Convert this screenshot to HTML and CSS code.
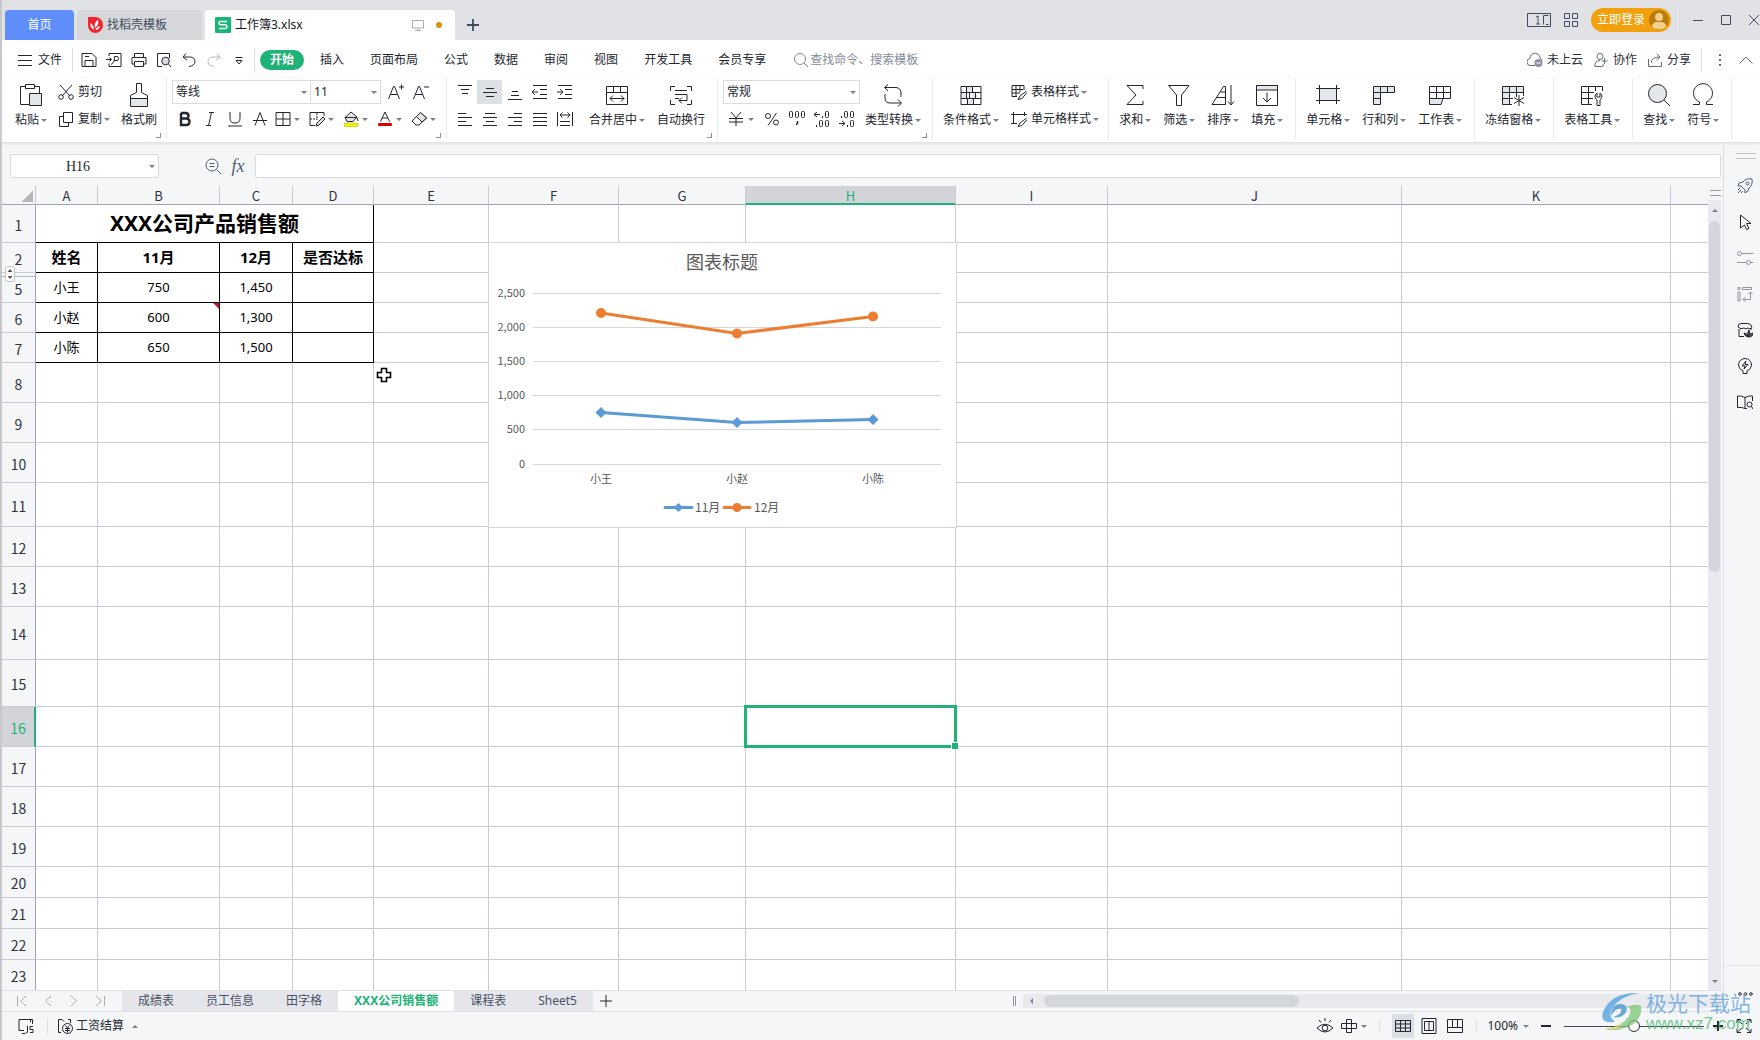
FILE: index.html
```html
<!DOCTYPE html>
<html lang="zh-CN">
<head>
<meta charset="utf-8">
<title>工作簿3.xlsx</title>
<link rel="stylesheet" href="styles.css">
</head>
<body>
<div class="app">
<header class="titlebar">
  <div class="doc-tabs">
    <button class="doc-tab home">首页</button>
    <button class="doc-tab store"><svg class="s16 logo" viewBox="0 0 16 16"><path d="M1 0H8A8 8 0 0 1 8 16A7.500 7.500 0 0 1 1 8Z" fill="#f5222d"/><path d="M7 13C4 11 3 9 3.500 6C6 8 7 10 7 13ZM8 11C7 8 8 5 11 2.500C12 6 11 9 8 11ZM8.500 13C9 11 11 9.500 13 9C12.500 11.500 11 12.800 8.500 13Z" fill="#fff"/></svg>找稻壳模板</button>
    <button class="doc-tab current"><svg class="s16 logo" viewBox="0 0 16 16"><rect width="16" height="16" rx="1" fill="#14b874"/><path d="M12 4.500H5.500Q4 4.500 4 6T5.500 7.800H10.500Q12 7.800 12 9.600T10.500 11.500H4" fill="none" stroke="#fff" stroke-width="1.500"/></svg><span class="doc-name">工作簿3.xlsx</span><svg class="s12 pale" viewBox="0 0 12 12"><path d="M.5 1.500H11.500V9H.5ZM6 9V11.500M3 11.500H9"/></svg><span class="dot"></span></button>
    <button class="plain add" aria-label="新建"><svg class="s12" viewBox="0 0 12 12"><path d="M6 0V12M0 6H12" stroke-width="1.800"/></svg></button>
  </div>
  <div class="win-tools">
    <button class="plain" aria-label="窗口"><svg class="w24" viewBox="0 0 24 16"><path d="M.5 1.500H23.500V14.500H.5ZM21.500 3.500H16.500V12.500M19 12.500H21.500M9 5L11 4V12M9 12H13"/></svg></button>
    <button class="plain" aria-label="应用"><svg class="s16" viewBox="0 0 16 16"><path d="M1.500 1.500H6.500V6.500H1.500ZM9.500 1.500H14.500V6.500H9.500ZM1.500 9.500H6.500V14.500H1.500ZM9.500 9.500H14.500V14.500H9.500Z"/></svg></button>
    <button class="login">立即登录<svg class="s20" viewBox="0 0 20 20"><circle cx="10" cy="10" r="10" fill="#b97c0a"/><circle cx="10" cy="7" r="4" fill="#f3cf8e"/><path d="M3 17Q3 12 8 12H12Q17 12 17 17Q10 22 3 17Z" fill="#f3cf8e"/></svg></button>
    <span class="bar tall"></span>
    <button class="plain" aria-label="最小化"><svg class="s12" viewBox="0 0 12 12"><path d="M1 6.500H11"/></svg></button>
    <button class="plain" aria-label="最大化"><svg class="s12" viewBox="0 0 12 12"><path d="M1.500 1.500H10.500V10.500H1.500Z"/></svg></button>
    <button class="plain" aria-label="关闭"><svg class="s12" viewBox="0 0 12 12"><path d="M1 1L11 11M11 1L1 11"/></svg></button>
  </div>
</header>

<nav class="menubar">
  <button class="plain file"><svg class="s16" viewBox="0 0 16 16"><path d="M1 3.500H15M1 8.500H15M1 13.500H15"/></svg>文件</button>
  <span class="bar"></span>
  <div class="quick">
    <button class="plain" aria-label="保存"><svg class="s16" viewBox="0 0 16 16"><path d="M1 1.500H11L15 5.500V14.500H1ZM4 14.500V8.500H12V14.500M4 4.500H8"/></svg></button>
    <button class="plain" aria-label="输出PDF"><svg class="s16" viewBox="0 0 16 16"><path d="M3 4V1.500H15V14.500H3V11.500M0 7.500H5M3.500 5.500L5.500 7.500L3.500 9.500M5 12.500C8 11 8.500 8 8.500 4.500H11Q12.500 4.500 12.500 6.500T11 8.500H8"/></svg></button>
    <button class="plain" aria-label="打印"><svg class="s16" viewBox="0 0 16 16"><path d="M3.500 5V1.500H12.500V5M3.500 12H1V5.500H15V12H12.500M3.500 9.500H12.500V14.500H3.500Z"/></svg></button>
    <button class="plain" aria-label="预览"><svg class="s16" viewBox="0 0 16 16"><path d="M6 14.500H1.500V1.500H13.500V6"/><circle cx="9.500" cy="9" r="3.800" fill="#d9dce2"/><path d="M12.500 12L15 15"/></svg></button>
    <button class="plain" aria-label="撤销"><svg class="s16" viewBox="0 0 16 16"><path d="M5 1.500L2 5L6 8M2.500 5H9.500Q14 5.500 14 9.500T8 14.500"/></svg></button>
    <button class="plain faint" aria-label="恢复"><svg class="s16" viewBox="0 0 16 16"><path d="M11 1.500L14 5L10 8M13.500 5H6.500Q2 5.500 2 9.500T8 14.500"/></svg></button>
    <button class="plain" aria-label="更多"><svg class="s16" viewBox="0 0 16 16"><path d="M4.500 5.500H11.500M5 8.500H11L8 12Z"/></svg></button>
  </div>
  <span class="bar"></span>
  <div class="menus">
    <button class="menu on">开始</button><button class="menu">插入</button><button class="menu">页面布局</button><button class="menu">公式</button><button class="menu">数据</button><button class="menu">审阅</button><button class="menu">视图</button><button class="menu">开发工具</button><button class="menu">会员专享</button>
  </div>
  <label class="search"><svg class="s16" viewBox="0 0 16 16"><circle cx="7" cy="7" r="5.500"/><path d="M11 11L15 15"/></svg><input type="text" placeholder="查找命令、搜索模板" aria-label="查找命令"></label>
  <div class="share">
    <button class="plain"><svg class="s16" viewBox="0 0 16 16"><path d="M8 13.500H4A3.500 3.500 0 0 1 3 6.500A5 5 0 0 1 13 6Q15 7 15 9"/><circle cx="11.500" cy="11" r="4" fill="#8e93a3" stroke="none"/><path d="M9.500 11H13.500" stroke="#fff"/></svg>未上云</button>
    <button class="plain"><svg class="s16" viewBox="0 0 16 16"><circle cx="7" cy="4.500" r="3"/><path d="M9 14.500H2Q1 9 7 8.500M9 14.500Q11 14 10 12M11.500 6V12M8.500 9H14.500"/></svg>协作</button>
    <button class="plain"><svg class="s16" viewBox="0 0 16 16"><path d="M1.500 7V14.500H14.500V10M4 11Q5 5 12 5M9.500 2L13 5L9.500 8"/></svg>分享</button>
    <span class="bar"></span>
    <button class="plain" aria-label="更多"><svg class="s16" viewBox="0 0 16 16"><path d="M8 2V4M8 7V9M8 12V14" stroke-width="2"/></svg></button>
    <button class="plain" aria-label="折叠"><svg class="s16" viewBox="0 0 16 16"><path d="M1.500 11.500L8 5L14.500 11.500"/></svg></button>
  </div>
</nav>

<section class="ribbon">
  <div class="group clip">
    <button class="big"><svg class="s24" viewBox="0 0 24 24"><path d="M6 3.500H1.500V21.500H10M16 3.500H20.500V10M6.500 1.500H15.500V5.500H6.500Z"/><path d="M10.500 10.500H22.500V22.500H10.500Z" fill="#e3e6ea"/></svg><span>粘贴<i class="caret"></i></span></button>
    <div class="stack">
      <button class="row"><svg class="s16" viewBox="0 0 16 16"><path d="M2 1L12 12M14 1L4 12"/><circle cx="3" cy="13" r="2.300"/><circle cx="13" cy="13" r="2.300"/></svg>剪切</button>
      <button class="row"><svg class="s16" viewBox="0 0 16 16"><path d="M5.500 1.500H14.500V11.500H5.500ZM5 5.500H1.500V15.500H10.500V12"/></svg>复制<i class="caret"></i></button>
    </div>
    <button class="big"><svg class="s24" viewBox="0 0 24 24"><path d="M3.500 15.500H20.500V23.500H3.500Z" fill="#e3e6ea"/><path d="M9.500 .5H14.500V9.500L20.500 12.500V15.500H3.500V12.500L9.500 9.500Z"/></svg><span>格式刷</span></button>
    <span class="corner"></span>
  </div>
  <div class="group type">
    <div class="stack">
      <div class="line">
        <span class="pick font"><select aria-label="字体"><option>等线</option></select></span><span class="pick size"><select aria-label="字号"><option>11</option></select></span>
        <button class="tool" aria-label="增大字号"><svg class="s16" viewBox="0 0 16 16"><path d="M.5 15L5.500 2.500H6.500L11.500 15M2.500 10.500H9.500M11 3H16M13.500 .5V5.500"/></svg></button>
        <button class="tool" aria-label="减小字号"><svg class="s16" viewBox="0 0 16 16"><path d="M.5 15L5.500 2.500H6.500L11.500 15M2.500 10.500H9.500M11 3H16"/></svg></button>
      </div>
      <div class="line">
        <button class="tool" aria-label="加粗"><svg class="s16" viewBox="0 0 16 16"><path d="M4 2H8.500Q11.500 2 11.500 4.800T8.500 7.500H4M4 7.500H9Q12.500 7.500 12.500 10.800T9 14H4V2" stroke-width="2.400"/></svg></button>
        <button class="tool" aria-label="倾斜"><svg class="s16" viewBox="0 0 16 16"><path d="M7 1.500H12M4 14.500H9M9.500 1.500L6.500 14.500"/></svg></button>
        <button class="tool" aria-label="下划线"><svg class="s16" viewBox="0 0 16 16"><path d="M3 1V7.500Q3 12 8 12T13 7.500V1M1 15H15"/></svg></button>
        <button class="tool" aria-label="删除线"><svg class="s16" viewBox="0 0 16 16"><path d="M3 14.500L8 1.500L13 14.500M1 9.500H15"/></svg></button>
        <button class="tool drop" aria-label="边框"><svg class="s16" viewBox="0 0 16 16"><path d="M1 1.500H15V14.500H1ZM8 1.500V14.500M1 8H15"/></svg><i class="caret"></i></button>
        <button class="tool drop" aria-label="绘制边框"><svg class="s16" viewBox="0 0 16 16"><path d="M15 5V1.500H1V14.500H6"/><path d="M8 2V9M1 8H8" stroke-dasharray="2 1"/><path d="M14 6L8 12L7 15L10 14L16 8Z" fill="#dfe2e7"/></svg><i class="caret"></i></button>
        <button class="tool drop" aria-label="填充颜色"><svg class="s16" viewBox="0 0 16 16"><path d="M8 1L14 6L10 10.500H4L2 6.500Z" fill="#e3e6ea"/><path d="M2 6.500H14L15 10"/><rect x="1" y="12" width="14" height="4" rx="2" fill="#f2f205" stroke="#9a9a33" stroke-width=".5"/></svg><i class="caret"></i></button>
        <button class="tool drop" aria-label="字体颜色"><svg class="s16" viewBox="0 0 16 16"><path d="M3.500 10.500L8 1L12.500 10.500M5 7H11"/><rect x="1" y="12" width="14" height="3" rx="1" fill="#e00000" stroke="none"/></svg><i class="caret"></i></button>
        <button class="tool drop" aria-label="清除"><svg class="s16" viewBox="0 0 16 16"><path d="M9.500 1.500L15.500 7L8 14H5L1 10Z"/><path d="M9.500 1.500L15.500 7L11 11L5.500 5.500Z" fill="#e3e6ea"/></svg><i class="caret"></i></button>
      </div>
    </div>
    <span class="corner"></span>
  </div>
  <div class="group align">
    <div class="stack">
      <div class="line">
        <button class="tool" aria-label="顶端对齐"><svg class="s16" viewBox="0 0 16 16"><path d="M1 1.500H15M4 5.500H12M5 9.500H11"/></svg></button>
        <button class="tool on" aria-label="垂直居中"><svg class="s16" viewBox="0 0 16 16"><path d="M4 4.500H12M1 8.500H15M4 12.500H12"/></svg></button>
        <button class="tool" aria-label="底端对齐"><svg class="s16" viewBox="0 0 16 16"><path d="M5 7.500H11M4 11.500H12M1 15.500H15"/></svg></button>
        <button class="tool" aria-label="减少缩进"><svg class="s16" viewBox="0 0 16 16"><path d="M1 1.500H15M8 5.500H15M8 10.500H15M1 14.500H15M0 8H6M3 5L0 8L3 11"/></svg></button>
        <button class="tool" aria-label="增加缩进"><svg class="s16" viewBox="0 0 16 16"><path d="M1 1.500H15M8 5.500H15M8 10.500H15M1 14.500H15M0 8H6M3 5L6 8L3 11"/></svg></button>
      </div>
      <div class="line">
        <button class="tool" aria-label="左对齐"><svg class="s16" viewBox="0 0 16 16"><path d="M1 2.500H9M1 6.500H15M1 10.500H9M1 14.500H15"/></svg></button>
        <button class="tool" aria-label="水平居中"><svg class="s16" viewBox="0 0 16 16"><path d="M3 2.500H13M1 6.500H15M4 10.500H12M1 14.500H15"/></svg></button>
        <button class="tool" aria-label="右对齐"><svg class="s16" viewBox="0 0 16 16"><path d="M7 2.500H15M1 6.500H15M7 10.500H15M1 14.500H15"/></svg></button>
        <button class="tool" aria-label="两端对齐"><svg class="s16" viewBox="0 0 16 16"><path d="M1 2.500H15M1 6.500H15M1 10.500H15M1 14.500H15"/></svg></button>
        <button class="tool" aria-label="分散对齐"><svg class="s16" viewBox="0 0 16 16"><path d="M.5 1V15M15.500 1V15M3 10.500H13M3 14.500H13M3 4H13M5.500 1.500L3 4L5.500 6.500M10.500 1.500L13 4L10.500 6.500"/></svg></button>
      </div>
    </div>
    <button class="big"><svg class="s24" viewBox="0 0 24 24"><path d="M1.500 3.500H22.500V21.500H1.500ZM1.500 9.500H22.500M8.500 3.500V9.500M15.500 3.500V9.500M5 15.500H19M8 12.500L5 15.500L8 18.500M16 12.500L19 15.500L16 18.500"/></svg><span>合并居中<i class="caret"></i></span></button>
    <button class="big"><svg class="s24" viewBox="0 0 24 24"><path d="M1.500 8V3.500H6M18 3.500H22.500V8M1.500 17V21.500H6M18 21.500H22.500V17M6 7.500H18M6 11.500H18V17.500H10M13 14.500L10 17.500L13 20.500M6 15.500H10"/></svg><span>自动换行</span></button>
    <span class="corner"></span>
  </div>
  <div class="group number">
    <div class="stack">
      <div class="line"><span class="pick format"><select aria-label="数字格式"><option>常规</option></select></span></div>
      <div class="line">
        <button class="tool drop" aria-label="货币"><svg class="s16" viewBox="0 0 16 16"><path d="M3 1L8 7L13 1M1 7.500H15M1 11H15M8 7V15"/></svg><i class="caret"></i></button>
        <button class="tool" aria-label="百分比"><svg class="s16" viewBox="0 0 16 16"><circle cx="4" cy="5" r="2.500"/><circle cx="12" cy="11.500" r="2.500"/><path d="M12.500 2L4 14.500"/></svg></button>
        <button class="tool" aria-label="千位分隔"><svg class="s18" viewBox="0 0 18 18"><rect x="1.500" y="1.500" width="3" height="6" rx="1"/><rect x="7.500" y="1.500" width="3" height="6" rx="1"/><rect x="13.500" y="1.500" width="3" height="6" rx="1"/><path d="M9.500 11V13L8.500 15" stroke-width="1.500"/></svg></button>
        <button class="tool" aria-label="增加小数位"><svg class="s18" viewBox="0 0 18 18"><path d="M1 4.500H7M4 2L1 4.500L4 7M9.500 6V8M3.500 15V17"/><rect x="12.500" y="1.500" width="3" height="6" rx="1"/><rect x="6.500" y="10.500" width="3" height="6" rx="1"/><rect x="12.500" y="10.500" width="3" height="6" rx="1"/></svg></button>
        <button class="tool" aria-label="减少小数位"><svg class="s18" viewBox="0 0 18 18"><path d="M1 13.500H7M4 11L7 13.500L4 16M9.500 15V17M3.500 6V8"/><rect x="12.500" y="10.500" width="3" height="6" rx="1"/><rect x="6.500" y="1.500" width="3" height="6" rx="1"/><rect x="12.500" y="1.500" width="3" height="6" rx="1"/></svg></button>
      </div>
    </div>
    <button class="big"><svg class="s24" viewBox="0 0 24 24"><path d="M7 1.500L3.500 4.500L7 8M4 4.500H15Q20 5 20 10V14M4 11V15Q4 20 9 20H20M17 16.500L20.500 20L17 23.500"/></svg><span>类型转换<i class="caret"></i></span></button>
    <span class="corner"></span>
  </div>
  <div class="group styles">
    <button class="big"><svg class="s24" viewBox="0 0 24 24"><path d="M2 9.500H7V15.500H2ZM13 9.500H18V15.500H13ZM7 15.500H14V21H7ZM7 4H13V9.500H7Z" fill="#e3e6ea" stroke="none"/><path d="M2 3.500H22V21.500H2ZM2 9.500H22M2 15.500H22M7.500 3.500V15.500M13.500 3.500V9.500M10.500 9.500V15.500M16.500 9.500V15.500M8.500 15.500V21.500M14.500 15.500V21.500"/></svg><span>条件格式<i class="caret"></i></span></button>
    <div class="stack">
      <button class="row"><svg class="s16" viewBox="0 0 16 16"><path d="M6 12.500H1V1.500H13V6M1 5.500H12M1 9H9M5 1.500V12M9 1.500V8M15.500 7L9 12L7 15.500L11 14.500L16 8.500"/></svg>表格样式<i class="caret"></i></button>
      <button class="row"><svg class="s16" viewBox="0 0 16 16"><path d="M0 3.500H16M2.500 1V13M0 12.500H6M13.500 1V5M15.500 7L9 12L7 15.500L11 14.500L16 8.500"/></svg>单元格样式<i class="caret"></i></button>
    </div>
  </div>
  <div class="group">
    <button class="big"><svg class="s24" viewBox="0 0 24 24"><path d="M20 6V2.500H4L13 12L4 21.500H20V18"/></svg><span>求和<i class="caret"></i></span></button>
    <button class="big"><svg class="s24" viewBox="0 0 24 24"><path d="M1.500 2.500H22L14.500 12V22.500H9.500V12Z"/></svg><span>筛选<i class="caret"></i></span></button>
    <button class="big"><svg class="s24" viewBox="0 0 24 24"><path d="M1 21.500L12.500 3.500H14.500V21.500ZM9.500 9H14M6 14.500H14M20 2V22M17 18.500L20 22L23 18.500"/></svg><span>排序<i class="caret"></i></span></button>
    <button class="big"><svg class="s24" viewBox="0 0 24 24"><path d="M1.500 2.500H22.500V7H1.500Z" fill="#e3e6ea"/><path d="M1.500 2.500H22.500V22.500H1.500ZM12 9.500V19M8 15L12 19L16 15"/></svg><span>填充<i class="caret"></i></span></button>
  </div>
  <div class="group">
    <button class="big"><svg class="s24" viewBox="0 0 24 24"><path d="M3.500 5.500H20.500V17.500H3.500Z" fill="#e3e6ea"/><path d="M0 5.500H24M0 17.500H24M3.500 2V21M20.500 2V21"/></svg><span>单元格<i class="caret"></i></span></button>
    <button class="big"><svg class="s24" viewBox="0 0 24 24"><path d="M1.500 3.500H22.500V9.500H8.500V21.500H1.500Z" fill="#e3e6ea"/><path d="M8.500 3.500V9.500M15.500 3.500V9.500M1.500 9.500H8.500M1.500 15.500H8.500"/></svg><span>行和列<i class="caret"></i></span></button>
    <button class="big"><svg class="s24" viewBox="0 0 24 24"><path d="M1.500 15.500H15L13 21.500H1.500Z" fill="#e3e6ea"/><path d="M1.500 3.500H22.500V15.500H1.500ZM1.500 9.500H22.500M8.500 3.500V15.500M15.500 3.500V15.500"/></svg><span>工作表<i class="caret"></i></span></button>
  </div>
  <div class="group">
    <button class="big"><svg class="s24" viewBox="0 0 24 24"><path d="M1.500 3.500H22.500V9.500H8.500V21.500H1.500Z" fill="#e3e6ea"/><path d="M8.500 3.500V9.500M15.500 3.500V14M1.500 9.500H8.500M1.500 15.500H12M22.500 9V13M8.500 21.500H11M18 12V23M13 14.500L23 20.500M23 14.500L13 20.500"/></svg><span>冻结窗格<i class="caret"></i></span></button>
  </div>
  <div class="group">
    <button class="big"><svg class="s24" viewBox="0 0 24 24"><path d="M12 21.500H1.500V3.500H22.500V8M1.500 9.500H14M1.500 15.500H13M8.500 3.500V21.500M15.500 3.500V8M17 10Q13 13 17 17V22.500H20V17Q24 13 20 10V14H17Z"/></svg><span>表格工具<i class="caret"></i></span></button>
  </div>
  <div class="group">
    <button class="big"><svg class="s24" viewBox="0 0 24 24"><circle cx="10.500" cy="10.500" r="9" fill="#e3e6ea"/><path d="M17 17L23 23"/></svg><span>查找<i class="caret"></i></span></button>
    <button class="big"><svg class="s24" viewBox="0 0 24 24"><path d="M2 21.500H8.500V19A9.500 9.500 0 1 1 15.500 19V21.500H22"/></svg><span>符号<i class="caret"></i></span></button>
  </div>
</section>

<div class="work">
<main class="book">
  <div class="formula">
    <span class="pick name"><input type="text" value="H16" aria-label="名称框"></span>
    <button class="plain zoomfx" aria-label="搜索"><svg class="s16" viewBox="0 0 16 16"><circle cx="7" cy="7" r="6"/><path d="M11.500 11.500L16 16M4.500 5.500H9.500M4.500 8.500H9.500"/></svg></button>
    <button class="plain fx"><i>fx</i></button>
    <input class="entry" type="text" aria-label="编辑栏">
  </div>
  <div class="sheet-row">
    <div class="sheet">
      <table>
        <colgroup><col class="ch"><col class="ca"><col class="cb"><col class="cc"><col class="cd"><col class="ce"><col class="cf"><col class="cg"><col class="chh"><col class="ci"><col class="cj"><col class="ck"><col></colgroup>
        <thead><tr><th><span class="all"></span></th><th>A</th><th>B</th><th>C</th><th>D</th><th>E</th><th>F</th><th>G</th><th class="sel">H</th><th>I</th><th>J</th><th>K</th><th></th></tr></thead>
        <tbody>
        <tr class="h38 data"><th>1</th><td colspan="4" class="title">XXX公司产品销售额</td><td></td><td></td><td></td><td></td><td></td><td></td><td></td><td></td></tr>
        <tr class="h30 data heads"><th>2</th><td>姓名</td><td>11月</td><td>12月</td><td>是否达标</td><td></td><td></td><td></td><td></td><td></td><td></td><td></td><td></td></tr>
        <tr class="h30 data after"><th>5</th><td>小王</td><td>750</td><td>1,450</td><td></td><td></td><td></td><td></td><td></td><td></td><td></td><td></td><td></td></tr>
        <tr class="h30 data"><th>6</th><td>小赵</td><td class="note">600</td><td>1,300</td><td></td><td></td><td></td><td></td><td></td><td></td><td></td><td></td><td></td></tr>
        <tr class="h30 data"><th>7</th><td>小陈</td><td>650</td><td>1,500</td><td></td><td></td><td></td><td></td><td></td><td></td><td></td><td></td><td></td></tr>
        <tr class="h40"><th>8</th><td></td><td></td><td></td><td></td><td></td><td></td><td></td><td></td><td></td><td></td><td></td><td></td></tr>
        <tr class="h40"><th>9</th><td></td><td></td><td></td><td></td><td></td><td></td><td></td><td></td><td></td><td></td><td></td><td></td></tr>
        <tr class="h40"><th>10</th><td></td><td></td><td></td><td></td><td></td><td></td><td></td><td></td><td></td><td></td><td></td><td></td></tr>
        <tr class="h44"><th>11</th><td></td><td></td><td></td><td></td><td></td><td></td><td></td><td></td><td></td><td></td><td></td><td></td></tr>
        <tr class="h40"><th>12</th><td></td><td></td><td></td><td></td><td></td><td></td><td></td><td></td><td></td><td></td><td></td><td></td></tr>
        <tr class="h40"><th>13</th><td></td><td></td><td></td><td></td><td></td><td></td><td></td><td></td><td></td><td></td><td></td><td></td></tr>
        <tr class="h53"><th>14</th><td></td><td></td><td></td><td></td><td></td><td></td><td></td><td></td><td></td><td></td><td></td><td></td></tr>
        <tr class="h47"><th>15</th><td></td><td></td><td></td><td></td><td></td><td></td><td></td><td></td><td></td><td></td><td></td><td></td></tr>
        <tr class="h40"><th class="sel">16</th><td></td><td></td><td></td><td></td><td></td><td></td><td></td><td class="active"></td><td></td><td></td><td></td><td></td></tr>
        <tr class="h40"><th>17</th><td></td><td></td><td></td><td></td><td></td><td></td><td></td><td></td><td></td><td></td><td></td><td></td></tr>
        <tr class="h40"><th>18</th><td></td><td></td><td></td><td></td><td></td><td></td><td></td><td></td><td></td><td></td><td></td><td></td></tr>
        <tr class="h40"><th>19</th><td></td><td></td><td></td><td></td><td></td><td></td><td></td><td></td><td></td><td></td><td></td><td></td></tr>
        <tr class="h31"><th>20</th><td></td><td></td><td></td><td></td><td></td><td></td><td></td><td></td><td></td><td></td><td></td><td></td></tr>
        <tr class="h31"><th>21</th><td></td><td></td><td></td><td></td><td></td><td></td><td></td><td></td><td></td><td></td><td></td><td></td></tr>
        <tr class="h31"><th>22</th><td></td><td></td><td></td><td></td><td></td><td></td><td></td><td></td><td></td><td></td><td></td><td></td></tr>
        <tr class="h31"><th>23</th><td></td><td></td><td></td><td></td><td></td><td></td><td></td><td></td><td></td><td></td><td></td><td></td></tr>
        </tbody>
      </table>
      <svg class="unhide" viewBox="0 0 10 16"><rect x=".5" y=".5" width="9" height="15" rx="2" fill="#fff" stroke="#c3c6cc"/><path d="M2.500 6H7.500L5 3ZM2.500 10H7.500L5 13Z" fill="#555" stroke="none"/></svg>
      <svg class="chart" viewBox="0 0 469 286" role="img" aria-label="图表标题">
        <rect x=".5" y=".5" width="468" height="285" fill="#fff" stroke="#d3d4dc"/>
        <path d="M45 51.500H453M45 85.500H453M45 119.500H453M45 153.500H453M45 187.500H453M45 222.500H453" stroke="#d6d6d6"/>
        <text x="234" y="27" class="chart-title">图表标题</text>
        <g class="ylab"><text x="37" y="55">2,500</text><text x="37" y="89">2,000</text><text x="37" y="123">1,500</text><text x="37" y="157">1,000</text><text x="37" y="191">500</text><text x="37" y="226">0</text></g>
        <g class="xlab"><text x="113" y="241">小王</text><text x="249" y="241">小赵</text><text x="385" y="241">小陈</text></g>
        <g stroke="#5b9bd5" fill="#5b9bd5"><path d="M113 170.500L249 180.500L385 177.500M177 265.500H204" fill="none" stroke-width="3" stroke-linecap="round"/><path d="M113 165L118.500 170.500L113 176L107.500 170.500ZM249 175L254.500 180.500L249 186L243.500 180.500ZM385 172L390.500 177.500L385 183L379.500 177.500ZM190.500 261L195 265.500L190.500 270L186 265.500Z" stroke="none"/></g>
        <g stroke="#ed7d31" fill="#ed7d31"><path d="M113 71L249 91.500L385 74.500M236 265.500H262" fill="none" stroke-width="3" stroke-linecap="round"/><circle cx="113" cy="71" r="5" stroke="none"/><circle cx="249" cy="91.500" r="5" stroke="none"/><circle cx="385" cy="74.500" r="5" stroke="none"/><circle cx="249" cy="265.500" r="4.500" stroke="none"/></g>
        <g class="legend"><text x="207" y="270">11月</text><text x="266" y="270">12月</text></g>
      </svg>
      <svg class="cursor" viewBox="0 0 16 16"><path d="M5.500 1.500H10.500V5.500H14.500V10.500H10.500V14.500H5.500V10.500H1.500V5.500H5.500Z" fill="#fff" stroke="#000" stroke-width="1.600"/></svg>
    </div>
    <div class="vscroll"><span class="split"></span><i class="up"></i><span class="thumb"></span><i class="caret"></i></div>
  </div>
  <div class="tabs-row">
    <div class="arrows">
      <button class="plain" aria-label="第一个"><svg class="s12" viewBox="0 0 12 12"><path d="M1.500 1V11M10 1L4.500 6L10 11"/></svg></button>
      <button class="plain" aria-label="上一个"><svg class="s12" viewBox="0 0 12 12"><path d="M9 1L3.500 6L9 11"/></svg></button>
      <button class="plain" aria-label="下一个"><svg class="s12" viewBox="0 0 12 12"><path d="M3 1L8.500 6L3 11"/></svg></button>
      <button class="plain" aria-label="最后一个"><svg class="s12" viewBox="0 0 12 12"><path d="M10.500 1V11M2 1L7.500 6L2 11"/></svg></button>
    </div>
    <div class="sheet-tabs"><button>成绩表</button><button>员工信息</button><button>田字格</button><button class="on">XXX公司销售额</button><button>课程表</button><button>Sheet5</button></div>
    <button class="plain new" aria-label="新建工作表"><svg class="s12" viewBox="0 0 12 12"><path d="M6 0V12M0 6H12"/></svg></button>
    <div class="hscroll"><span class="grip"></span><div class="track"><i class="left"></i><span class="thumb"></span></div></div>
  </div>
</main>
<aside class="side">
  <span class="handle"></span>
  <button class="plain" aria-label="推荐"><svg class="s16" viewBox="0 0 16 16"><path d="M15 1Q9 0 6 4L2 5L1 8L4 8L8 12L8 15L11 13L12 10Q16 7 15 1ZM1 15L4 12M1 12L3 10M4 15L6 13"/><circle cx="10.500" cy="5.500" r="1.500"/></svg></button>
  <button class="plain dark" aria-label="选择"><svg class="s16" viewBox="0 0 16 16"><path d="M3.500 1L14 9.500H9.500L12 14.500L9.500 15.500L7.500 11L3.500 14Z"/></svg></button>
  <button class="plain mid" aria-label="属性"><svg class="s16" viewBox="0 0 16 16"><circle cx="2.500" cy="3.500" r="2"/><circle cx="11.500" cy="12.500" r="2"/><path d="M5 3.500H16M0 12.500H9M14 12.500H16"/></svg></button>
  <button class="plain mid" aria-label="对象"><svg class="s16" viewBox="0 0 16 16"><path d="M1 1.500H3V3.500H1ZM5.500 1.500H14.500V3.500H5.500ZM1 6H3V15H1ZM6 13.500H13.500V6M11 8.500L13.500 6L16 8.500M8.500 11L6 13.500L8.500 16"/></svg></button>
  <button class="plain dark" aria-label="资源"><svg class="s16" viewBox="0 0 16 16"><path d="M7 14.500H2V7M14 6V8M1 5Q1 1.500 4 1.500H11Q14.500 2 15 5.500Q13 8 11 6Q9 8 7 6Q4 8 1 5Z"/><path d="M7 11Q10 11 11.500 15Q8 15 7 11ZM11.500 15Q9.500 11 12 8Q14 12 11.500 15Q16 15 16 11Q14 11 12.500 13" fill="#555b66"/></svg></button>
  <button class="plain dark" aria-label="创意"><svg class="s16" viewBox="0 0 16 16"><path d="M6 15.500H10V13Q14.500 11 14.500 7A6.500 6.500 0 0 0 1.500 7Q1.500 11 6 13ZM9 3L5 8H8L7 11L11 6.500H8Z"/></svg></button>
  <button class="plain dark" aria-label="帮助"><svg class="s16" viewBox="0 0 16 16"><path d="M8 3.500Q5 1.500 .5 2V13.500Q5 13 8 14.500V3.500Q11 1.500 15.500 2V7M8 14.500H10"/><circle cx="12.500" cy="10.500" r="2.500"/><path d="M14.500 12.500L16 15"/></svg></button>
  <span class="rule"></span>
  <button class="plain dark" aria-label="更多"><svg class="s16" viewBox="0 0 16 16"><circle cx="3" cy="8" r="1.300"/><circle cx="8.500" cy="8" r="1.300"/><circle cx="14" cy="8" r="1.300"/></svg></button>
</aside>
</div>

<footer class="status">
  <button class="plain" aria-label="宏"><svg class="s16" viewBox="0 0 16 16"><path d="M6 12.500H1V1.500H14.500V6M4 15.500H7M9.500 8V14Q9 15.500 7.500 15M15 8.500H12V11.500H15V14.500H12M12.500 4V1.500"/></svg></button>
  <span class="bar"></span>
  <button class="plain pay"><svg class="s16" viewBox="0 0 16 16"><path d="M4 14.500H1.500V1.500H5L7 3.500M11 1.500H13.500V5"/><circle cx="10.500" cy="10.500" r="5"/><path d="M8.500 7.500L10.500 10L12.500 7.500M8 10.500H13M8 12.500H13M10.500 10V14.500"/></svg>工资结算<i class="up"></i></button>
  <div class="views">
    <button class="plain" aria-label="护眼"><svg class="s16" viewBox="0 0 16 16"><path d="M0 10Q8 2.500 16 10Q8 18 0 10ZM8 0V3M2 2L4 4.500M14 2L12 4.500"/><circle cx="8" cy="10" r="2.800"/></svg></button>
    <button class="plain" aria-label="阅读模式"><svg class="s16" viewBox="0 0 16 16"><path d="M5.500 1.500H10.500V14.500H5.500ZM.5 5.500H15.500V10.500H.5Z"/></svg><i class="caret"></i></button>
    <span class="bar"></span>
    <button class="plain view on" aria-label="普通视图"><svg class="s16" viewBox="0 0 16 16"><path d="M.5 2.500H15.500V13.500H.5ZM.5 6H15.500M.5 10H15.500M5.500 2.500V13.500M10.500 2.500V13.500"/></svg></button>
    <button class="plain view" aria-label="页面布局"><svg class="s16" viewBox="0 0 16 16"><path d="M1 .5H15V15.500H1ZM3.500 3.500H12.500V12.500H3.500ZM8 3.500V12.500"/></svg></button>
    <button class="plain view" aria-label="分页预览"><svg class="s16" viewBox="0 0 16 16"><path d="M.5 1.500H15.500V14.500H.5ZM.5 9.500H10.500M5.500 1.500V9.500M10.500 1.500V9.500H15.500"/></svg></button>
    <span class="bar"></span>
    <button class="plain pct">100%<i class="caret"></i></button>
    <button class="plain" aria-label="缩小"><svg class="s12" viewBox="0 0 12 12"><path d="M1 6H11" stroke-width="2"/></svg></button>
    <input class="zoom" type="range" min="0" max="100" value="50" aria-label="缩放">
    <button class="plain" aria-label="放大"><svg class="s12" viewBox="0 0 12 12"><path d="M1 6H11M6 1V11" stroke-width="2"/></svg></button>
    <button class="plain full" aria-label="全屏"><svg class="s16" viewBox="0 0 16 16"><path d="M1 5V1.500H5M11 1.500H15V5M1 11V14.500H5M11 14.500H15V11M1 1.500L6 6M15 1.500L10 6M1 14.500L6 10M15 14.500L10 10"/></svg></button>
  </div>
</footer>
<div class="mark">
  <svg class="swirl" viewBox="0 0 44 40"><path d="M38 1Q10 0 2 20Q-2 32 14 30Q6 24 12 15Q20 4 38 1Z" fill="#4f9fdc"/><path d="M40 14Q42 30 24 36Q12 40 4 37Q22 34 28 24Q32 17 26 15Q34 11 40 14Z" fill="#7cc576"/><path d="M10 24Q10 12 20 12Q28 13 25 20Q21 27 12 25Q22 22 20 17Q15 15 10 24Z" fill="#3f8fd0"/><path d="M4 37Q14 36 22 30Q18 40 4 37Z" fill="#f0c65a"/></svg>
  <div class="mark-text"><span>极光下载站</span><b>www.xz7.com</b></div>
</div>
</div>
</body>
</html>
```
FILE: styles.css
```css
* { box-sizing: border-box; }
html, body { height: 100%; margin: 0; }
body {
  font: 12px/16px "Noto Sans", "Noto Sans CJK SC", sans-serif;
  color: #23262f;
  overflow: hidden;
}
button, input, select { font: inherit; color: inherit; margin: 0; }
button { border: 0; padding: 0; background: none; white-space: nowrap; }
input { outline: 0; }
svg { fill: none; stroke: currentColor; stroke-width: 1; flex: none; display: block; }
.s12 { width: 12px; height: 12px; }
.s16 { width: 16px; height: 16px; }
.s18 { width: 18px; height: 18px; }
.s20 { width: 20px; height: 20px; stroke: none; }
.s24 { width: 24px; height: 24px; }
.w24 { width: 24px; height: 16px; }
.logo { stroke: none; }
.app {
  position: relative;
  height: 100vh;
  display: flex;
  flex-direction: column;
  border-left: 2px solid #c6c8cb;
  background: #f4f6f8;
}
.plain { display: flex; align-items: center; justify-content: center; gap: 4px; }
.bar { width: 1px; height: 24px; background: #dcdee2; flex: none; }
.caret, .up, .left { display: inline-block; width: 0; height: 0; border: 3px solid transparent; flex: none; }
.caret { border-top-color: #7b7f88; border-bottom: 0; }
.up { border-bottom-color: #7b7f88; border-top: 0; }
.left { border-right-color: #7b7f98; border-left: 0; }

/* title bar */
.titlebar { display: flex; height: 40px; background: #e1e2e6; color: #414a60; flex: none; }
.doc-tabs { display: flex; align-items: flex-end; padding-left: 3px; gap: 3px; flex: 1; }
.doc-tab { height: 30px; border-radius: 4px 4px 0 0; display: flex; align-items: center; }
.home { width: 69px; background: #5f8dfa; color: #fff; justify-content: center; }
.store { width: 125px; background: #d5d7da; padding-left: 10px; gap: 4px; }
.current { width: 250px; background: #fff; color: #15171c; padding: 0 13px 0 10px; gap: 4px; }
.doc-name { flex: 1; text-align: left; }
.pale { color: #a9adb5; }
.dot { width: 6px; height: 6px; border-radius: 50%; background: #d9920b; margin-left: 8px; }
.add { height: 30px; width: 30px; }
.win-tools { display: flex; align-items: center; gap: 12px; height: 40px; }
.login { height: 24px; border-radius: 12px; background: #f2a10c; color: #fff; display: flex; align-items: center; gap: 4px; padding: 0 2px 0 6px; }
.bar.tall { margin-left: -4px; }
.bar.tall ~ .plain + .plain { margin-left: 4px; }

/* menu bar */
.menubar { display: flex; align-items: center; height: 39px; background: #fff; padding-right: 6px; flex: none; }
.file { padding: 0 10px 0 15px; gap: 5px; }
.quick { display: flex; gap: 9px; padding: 0 7px 0 8px; }
.faint { color: #b5b8bf; }
.menus { display: flex; gap: 6px; padding-left: 5px; }
.menu { height: 20px; padding: 0 10px; border-radius: 10px; }
.menu.on { background: #20b276; color: #fff; font-weight: 700; }
.search { display: flex; align-items: center; gap: 1px; margin-left: 17px; color: #858b9c; }
.search input { width: 130px; border: 0; padding: 0; background: none; }
.search input::placeholder { color: #858b9c; opacity: 1; }
.share { display: flex; align-items: center; gap: 10px; margin-left: auto; color: #2b3040; }
.share svg { color: #666b7a; }

/* ribbon */
.ribbon { display: flex; background: #fff; height: 63px; flex: none; box-shadow: 0 1px 3px #d4d6da; position: relative; }
.group { position: relative; display: flex; gap: 12px; padding: 1px 12px 0 10px; border-right: 1px solid #e9eaed; height: 60px; flex: none; }
.clip { padding: 1px 9px 0 13px; gap: 11px; }
.type { padding: 1px 4px 0 5px; }
.align { padding: 1px 12px 0 5px; }
.number { padding: 1px 11px 0 5px; gap: 5px; }
.styles { padding-right: 9px; }
.corner { position: absolute; right: 5px; bottom: 1px; width: 5px; height: 5px; border: solid #8a8d95; border-width: 0 1px 1px 0; }
.big { height: 48px; display: flex; flex-direction: column; align-items: center; justify-content: space-between; padding-top: 3px; }
.big > span, .row { display: flex; align-items: center; gap: 2px; }
.stack { display: flex; flex-direction: column; gap: 3px; }
.row { height: 24px; }
.row .s16 { margin-right: 2px; }
.line { display: flex; height: 24px; align-items: center; }
.tool { width: 25px; height: 24px; display: flex; align-items: center; justify-content: center; }
.tool.on { background: #dde1e6; }
.tool.drop { width: 34px; gap: 3px; justify-content: flex-start; padding-left: 3px; }
.number .drop { width: 36px; gap: 4px; padding-left: 5px; }
.pick { position: relative; display: block; height: 24px; border: 1px solid #d9dbdf; background: #fff; }
.pick::after { content: ""; position: absolute; right: 3px; top: 10px; border: 3px solid transparent; border-top-color: #7b7f88; border-bottom: 0; }
.pick select, .pick input { width: 100%; height: 22px; border: 0; padding: 0 3px; background: none; appearance: none; outline: 0; display: block; }
.font { width: 139px; }
.size { width: 70px; border-left: 0; margin-right: 2px; }
.format { width: 137px; }

/* formula bar */
.work { display: flex; flex: 1; min-height: 0; }
.book { flex: 1; min-width: 0; display: flex; flex-direction: column; }
.formula { display: flex; align-items: center; height: 44px; padding: 4px 2px 0 8px; flex: none; }
.name { width: 149px; border-radius: 2px; }
.pick.name input { text-align: center; padding: 2px 16px 0 3px; font: 14px/20px "Liberation Serif", "Noto Sans CJK SC", serif; }
.zoomfx { margin-left: 46px; color: #555d70; }
.fx { width: 24px; margin: 0 5px; font: 18px/24px "Liberation Serif", serif; color: #555d70; }
.entry { flex: 1; height: 24px; border: 1px solid #d9dbdf; border-radius: 2px; background: #fff; }

/* grid */
.sheet-row { display: flex; flex: 1; min-height: 0; }
.sheet { position: relative; flex: 1; min-width: 0; overflow: hidden; }
table { width: 100%; table-layout: fixed; border-collapse: separate; border-spacing: 0; background: #fff; }
.ch { width: 34px; } .ca { width: 62px; } .cb { width: 122px; } .cc { width: 73px; }
.cd { width: 81px; } .ce { width: 115px; } .cf { width: 130px; } .cg { width: 127px; }
.chh { width: 210px; } .ci { width: 152px; } .cj { width: 294px; } .ck { width: 269px; }
th, td { padding: 0; border: solid #c8cad5; border-width: 0 1px 1px 0; text-align: center; line-height: 16px; }
th { background: #f4f6f8; font-weight: 400; font-size: 14px; font-family: "Noto Sans CJK SC", sans-serif; color: #30343e; padding-top: 2px; }
thead th { height: 19px; border-bottom-color: #9fa3b5; font-size: 13px; }
tbody th { border-right-color: #9fa3b5; }
th:last-child, td:last-child { border-right: 0; }
th.sel { background: #d2d4d9; color: #20b276; }
thead th.sel { box-shadow: inset 0 -1px #20b276; border-bottom-color: #20b276; }
tbody th.sel { border-right: 2px solid #20b276; }
.all { display: block; width: 11px; height: 11px; margin-left: 20px; background: linear-gradient(135deg, transparent 50%, #b4b6ba 50%); }
td { font-size: 13px; color: #000; padding-bottom: 2px; }
.h30 { height: 30px; } .h31 { height: 31px; } .h38 { height: 38px; } .h40 { height: 40px; }
.h44 { height: 44px; } .h47 { height: 47px; } .h53 { height: 53px; }
.data td:nth-child(-n+5):not(.title ~ td), .data .title { border-color: #000; }
.title { font-size: 21px; font-weight: 700; }
.heads td { font-size: 15px; font-weight: 700; }
.after th { box-shadow: inset 0 3px #f4f6f8, inset 0 4px #b6bac8; }
.note { position: relative; }
.note::after { content: ""; position: absolute; right: 0; top: 0; border: 3px solid #c3182b; border-left-color: transparent; border-bottom-color: transparent; }
.active { position: relative; }
.active::before { content: ""; position: absolute; inset: -2px; border: 3px solid #20b276; }
.active::after { content: ""; position: absolute; right: -3px; bottom: -3px; width: 6px; height: 6px; background: #20b276; border: solid #fff; border-width: 1px 0 0 1px; }
.unhide { position: absolute; left: 3px; top: 80px; width: 10px; height: 16px; }
.chart { position: absolute; left: 486px; top: 56px; width: 469px; height: 286px; }
.chart text { stroke: none; fill: #595959; font-family: "Noto Sans CJK SC", sans-serif; font-size: 11px; }
.chart .chart-title { font-size: 18px; text-anchor: middle; }
.ylab { text-anchor: end; }
.xlab { text-anchor: middle; }
.chart .legend text { font-size: 12px; }
.cursor { position: absolute; left: 374px; top: 181px; width: 16px; height: 16px; }

/* scroll bars */
.vscroll { width: 13px; margin-right: 2px; background: #e9e9f0; display: flex; flex-direction: column; align-items: center; padding-bottom: 7px; }
.split { width: 100%; height: 14px; background: #f4f6f8; flex: none; margin-bottom: 9px; position: relative; }
.split::after, .handle::after { content: ""; position: absolute; left: 2px; right: 0; top: 4px; height: 4px; border: solid #9a9da6; border-width: 1px 0; }
.handle::after { top: 3px; border-color: #c2c5cc; }
.vscroll .thumb { width: 11px; height: 351px; border-radius: 6px; background: #d4d5df; margin: 9px 0 auto; }
.tabs-row { display: flex; height: 22px; border-top: 1px solid #dfe1e6; border-bottom: 1px solid #dfe1e6; align-items: stretch; flex: none; }
.arrows { display: flex; gap: 14px; padding: 0 16px 0 14px; color: #a9adb6; width: 120px; }
.sheet-tabs { display: flex; background: #e4e6eb; color: #4a5167; }
.sheet-tabs button { padding: 0 16px; line-height: 20px; }
.sheet-tabs .on { background: #fff; color: #20b276; font-weight: 700; }
.new { width: 26px; }
.hscroll { flex: 1; display: flex; justify-content: flex-end; align-items: center; gap: 7px; }
.grip { width: 3px; height: 10px; border: solid #9699a6; border-width: 0 1px; }
.track { height: 14px; background: #e8eaee; display: flex; align-items: center; padding-left: 7px; gap: 11px; flex: 0 1 700px; }
.track .thumb { width: 255px; height: 12px; border-radius: 6px; background: #d3d6db; }

/* task pane */
.side { width: 37px; border-left: 1px solid #dcdee4; display: flex; flex-direction: column; align-items: center; gap: 20px; padding: 8px 4px 10px 10px; color: #4d5a7a; overflow: hidden; }
.handle { position: relative; width: 22px; height: 8px; }
.dark { color: #23262f; }
.mid { color: #9296a3; }
.rule { width: 37px; height: 1px; background: #dfe1e6; margin-top: auto; }

/* status bar */
.status { display: flex; align-items: center; height: 28px; flex: none; padding: 0 8px 0 16px; gap: 9px; }
.status > .bar { margin-left: 4px; height: 16px; }
.pay { gap: 3px; }
.pay .up { margin-left: 5px; }
.views { margin-left: auto; display: flex; align-items: center; gap: 8px; }
.views .bar { height: 12px; margin: 0 4px; }
.view { width: 22px; height: 24px; }
.view.on { background: #dadee7; }
.views .view + .view { margin-left: -4px; }
.views .view + .bar { margin: 0 2px; }
.pct { gap: 5px; margin-right: 3px; }
.zoom { appearance: none; width: 140px; height: 16px; margin: 0 0 0 4px; background: linear-gradient(#444853, #444853) center / 100% 1px no-repeat; }
.zoom::-webkit-slider-thumb { appearance: none; width: 12px; height: 12px; border: 1px solid #333; border-radius: 50%; background: #fff; }
.full { margin-left: 4px; }

/* site mark over the lower right corner */
.mark { position: absolute; right: 9px; bottom: 6px; display: flex; align-items: center; gap: 1px; pointer-events: none; opacity: .75; }
.swirl { width: 44px; height: 40px; stroke: none; }
.mark-text { display: flex; flex-direction: column; }
.mark-text span { font: 21px/24px "Noto Sans CJK SC", sans-serif; color: #5f9fdc; }
.mark-text b { font: 500 17px/20px "Liberation Sans", sans-serif; color: #4fb870; }
```
